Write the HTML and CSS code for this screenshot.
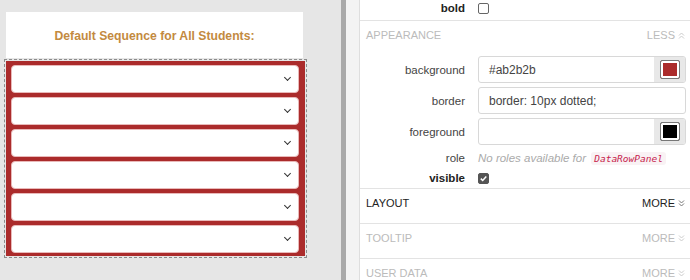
FILE: index.html
```html
<!DOCTYPE html>
<html lang="en">
<head>
  <meta charset="UTF-8">
  <title>DataRowPanel</title>
  <link rel="stylesheet" href="styles.css">
</head>
<body>
  <div class="stage">
    <div class="card">Default Sequence for All Students:</div>
    <div class="selection">
      <div class="rows">
        <div class="pick"><span class="chev"></span></div>
        <div class="pick"><span class="chev"></span></div>
        <div class="pick"><span class="chev"></span></div>
        <div class="pick"><span class="chev"></span></div>
        <div class="pick"><span class="chev"></span></div>
        <div class="pick"><span class="chev"></span></div>
      </div>
    </div>
  </div>
  <div class="splitter"></div>
  <div class="gutter"></div>
  <div class="props">
    <div class="prop top">
      <span class="name strong">bold</span>
      <span class="box"></span>
    </div>
    <div class="section open">
      <div class="head muted">
        <span>APPEARANCE</span>
        <span class="toggle">LESS
          <svg width="7" height="7" viewBox="0 0 7 7"><path d="M1 3.5L3.5 1L6 3.5M1 6.5L3.5 4L6 6.5" fill="none" stroke="#ccc" stroke-width="1"/></svg>
        </span>
      </div>
      <div class="prop field">
        <span class="name">background</span>
        <div class="input">#ab2b2b<span class="swatch"><i class="red"></i></span></div>
      </div>
      <div class="prop field">
        <span class="name">border</span>
        <div class="input">border: 10px dotted;</div>
      </div>
      <div class="prop field">
        <span class="name">foreground</span>
        <div class="input"><span class="swatch"><i class="black"></i></span></div>
      </div>
      <div class="prop">
        <span class="name">role</span>
        <span class="note">No roles available for <code>DataRowPanel</code></span>
      </div>
      <div class="prop last">
        <span class="name strong">visible</span>
        <span class="box checked">
          <svg width="9" height="9" viewBox="0 0 9 9"><path d="M1.8 4.6L3.7 6.5L7.3 2.4" fill="none" stroke="#fff" stroke-width="1.5"/></svg>
        </span>
      </div>
    </div>
    <div class="section">
      <div class="head">
        <span>LAYOUT</span>
        <span class="toggle">MORE
          <svg width="7" height="7" viewBox="0 0 7 7"><path d="M1 0.5L3.5 3L6 0.5M1 3.5L3.5 6L6 3.5" fill="none" stroke="#777" stroke-width="1"/></svg>
        </span>
      </div>
    </div>
    <div class="section">
      <div class="head muted">
        <span>TOOLTIP</span>
        <span class="toggle">MORE
          <svg width="7" height="7" viewBox="0 0 7 7"><path d="M1 0.5L3.5 3L6 0.5M1 3.5L3.5 6L6 3.5" fill="none" stroke="#ccc" stroke-width="1"/></svg>
        </span>
      </div>
    </div>
    <div class="section">
      <div class="head muted">
        <span>USER DATA</span>
        <span class="toggle">MORE
          <svg width="7" height="7" viewBox="0 0 7 7"><path d="M1 0.5L3.5 3L6 0.5M1 3.5L3.5 6L6 3.5" fill="none" stroke="#ccc" stroke-width="1"/></svg>
        </span>
      </div>
    </div>
  </div>
</body>
</html>
```

FILE: styles.css
```css
body {
  margin: 0;
  width: 690px;
  height: 280px;
  overflow: hidden;
  display: flex;
  font-family: "Liberation Sans", Arial, sans-serif;
  font-size: 11px;
  color: #333;
}
.stage {
  width: 341px;
  background: #e6e6e6;
  padding: 12px 0 0 4px;
  box-sizing: border-box;
}
.card {
  margin-left: 2px;
  width: 297px;
  height: 46px;
  background: #fff;
  display: flex;
  align-items: center;
  justify-content: center;
  padding-top: 2px;
  box-sizing: border-box;
  font-size: 12.2px;
  font-weight: bold;
  color: #c38a3f;
}
.selection {
  margin-top: 1px;
  width: 303px;
  border: 1px dashed #8c8c8c;
  padding: 1px;
  box-sizing: border-box;
}
.rows {
  background: #ab2b2b;
  padding: 4px 6px 3px 5px;
  display: flex;
  flex-direction: column;
  gap: 4px;
}
.pick {
  height: 28px;
  background: #fff;
  border: 1px solid #e9b9b9;
  border-radius: 4px;
  box-sizing: border-box;
  display: flex;
  align-items: center;
  justify-content: flex-end;
  padding-right: 8px;
}
.chev {
  width: 4px;
  height: 4px;
  border-right: 1.5px solid #333;
  border-bottom: 1.5px solid #333;
  transform: rotate(45deg);
  margin-top: -3px;
}
.splitter {
  width: 5px;
  background: #a9a9a9;
}
.gutter {
  width: 13px;
  background: #f3f3f3;
}
.props {
  flex: 1;
  background: #fff;
  border-left: 1px solid #dedede;
}
.prop {
  display: flex;
  align-items: center;
  gap: 13px;
  height: 21px;
}
.prop.top {
  height: 16px;
  padding-bottom: 4px;
  border-bottom: 1px solid #e3e3e3;
}
.prop.last {
  height: 20px;
}
.name {
  width: 105px;
  text-align: right;
  font-size: 11.5px;
  color: #444;
}
.name.strong {
  font-weight: bold;
  color: #222;
}
.box {
  width: 11px;
  height: 11px;
  border: 1px solid #666;
  border-radius: 2px;
  box-sizing: border-box;
  display: flex;
  align-items: center;
  justify-content: center;
}
.box.checked {
  background: #555;
  border-color: #555;
}
.section {
  border-bottom: 1px solid #e3e3e3;
}
.head {
  display: flex;
  justify-content: space-between;
  align-items: flex-start;
  height: 34px;
  box-sizing: border-box;
  padding: 8px 5px 0 6px;
  font-size: 11px;
  line-height: 13px;
  color: #222;
}
.section.open .head {
  height: 28px;
  margin-bottom: 7px;
}
.head.muted {
  color: #bbb;
}
.toggle {
  display: flex;
  align-items: center;
  gap: 3px;
}
.field {
  height: 27px;
  margin-bottom: 4px;
}
.field + .prop:not(.field) {
  margin-top: -2px;
}
.input {
  flex: 1;
  height: 27px;
  margin-right: 4px;
  border: 1px solid #d8d8d8;
  border-radius: 3px;
  box-sizing: border-box;
  display: flex;
  align-items: center;
  padding-left: 10px;
  font-size: 12px;
  color: #444;
  position: relative;
  overflow: hidden;
}
.swatch {
  position: absolute;
  top: 0;
  right: 0;
  bottom: 0;
  width: 31px;
  background: #e8e8e8;
  display: flex;
  align-items: center;
  justify-content: center;
}
.swatch i {
  width: 20px;
  height: 19px;
  border: 1px solid #777;
  border-radius: 2px;
  box-shadow: inset 0 0 0 2px #fff;
  box-sizing: border-box;
}
.swatch .red {
  background: #ab2b2b;
}
.swatch .black {
  background: #000;
}
.note {
  font-style: italic;
  color: #aaa;
  font-size: 11.5px;
}
code {
  font-family: "DejaVu Sans Mono", monospace;
  font-size: 9.5px;
  color: #c7254e;
  background: #f9f2f4;
  padding: 1px 3px;
  border-radius: 3px;
  margin-left: 2px;
}
```
